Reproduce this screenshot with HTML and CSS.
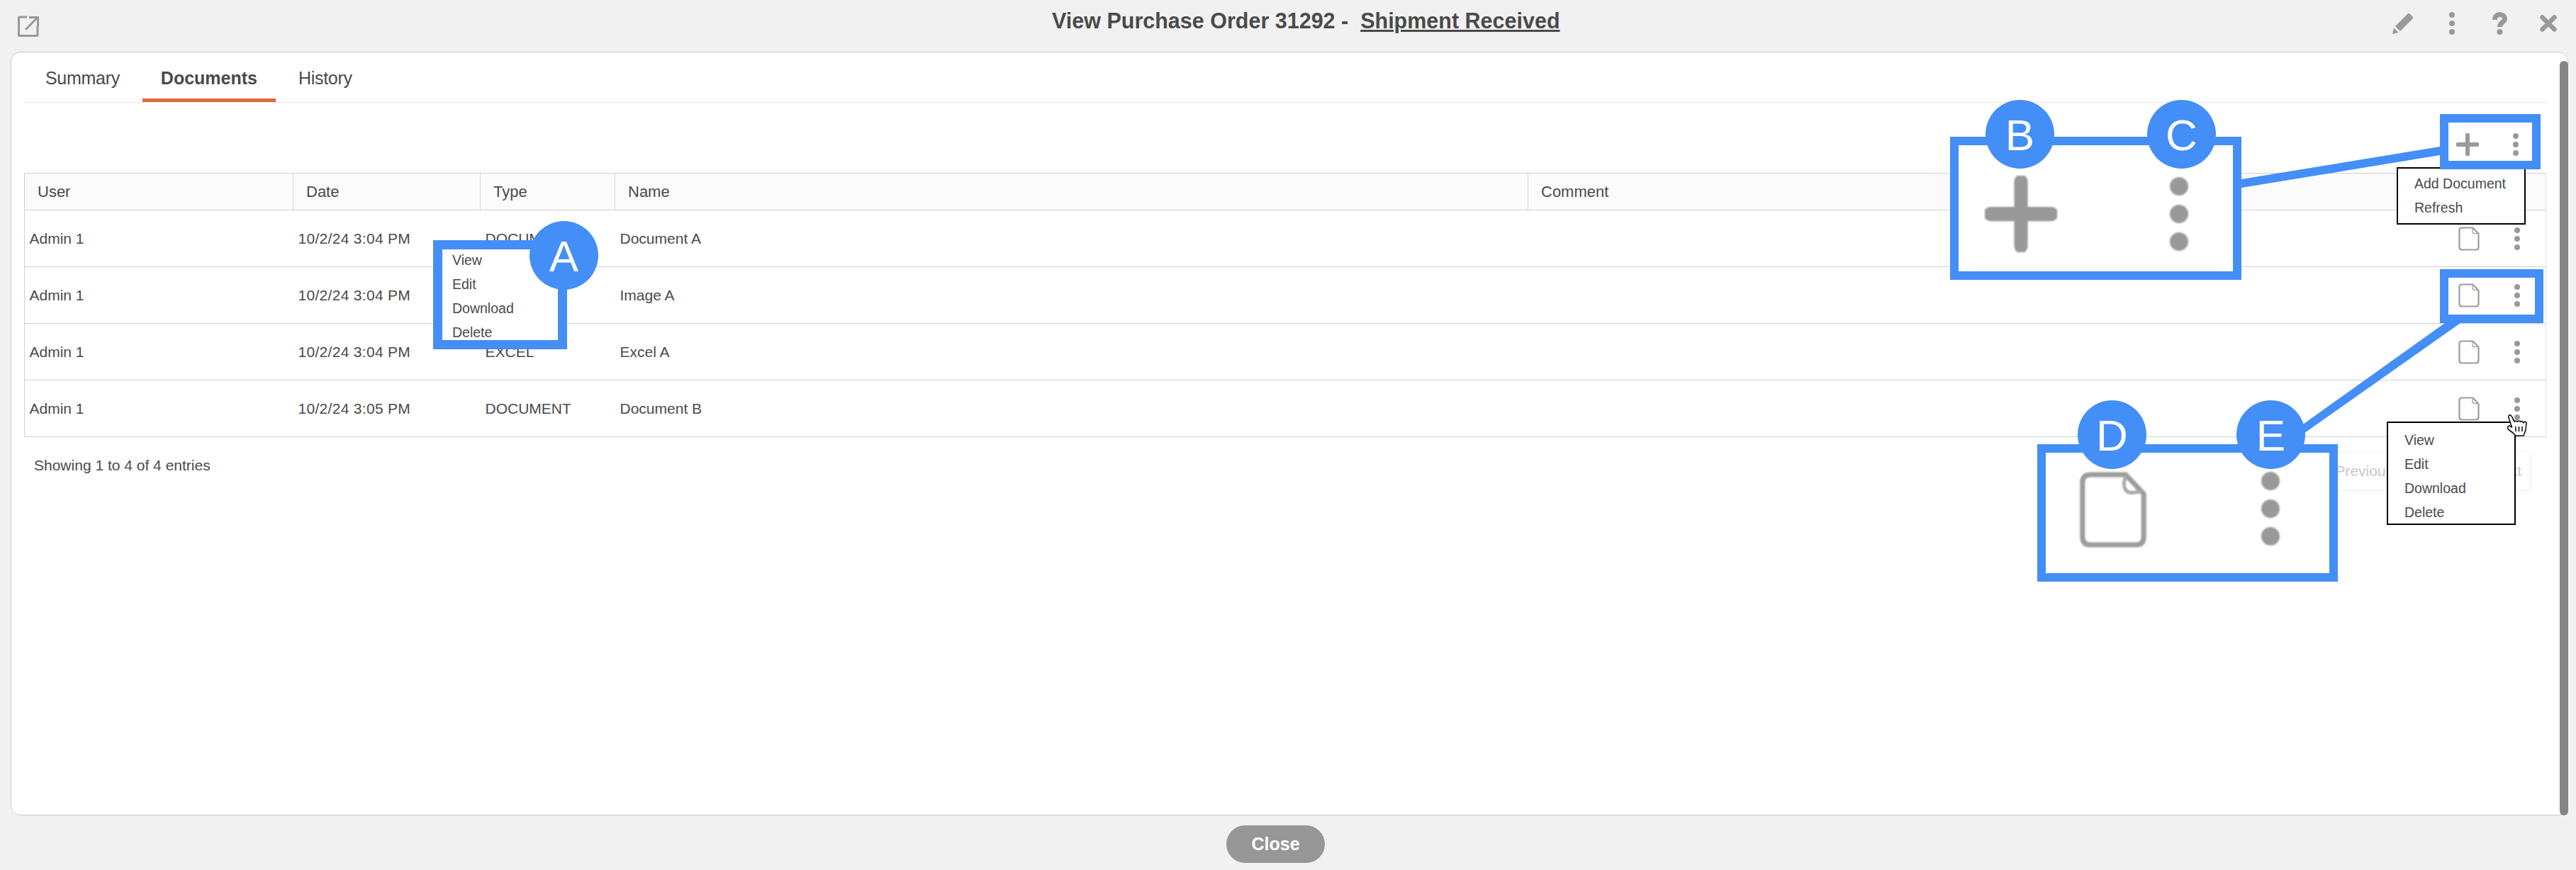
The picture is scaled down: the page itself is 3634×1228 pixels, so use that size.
FILE: index.html
```html
<!DOCTYPE html>
<html lang="en">
<head>
<meta charset="utf-8">
<title>View Purchase Order 31292</title>
<link rel="stylesheet" href="styles.css">
</head>
<body>
<svg class="defs" width="0" height="0" aria-hidden="true">
  <symbol id="doc" viewBox="0 0 30 34">
    <path d="M5 1.500H20.500L28.500 10V29Q28.500 32.500 25 32.500H5Q1.500 32.500 1.500 29V5Q1.500 1.500 5 1.500Z" fill="#fff" stroke="#9c9c9c" stroke-width="2.200" stroke-linejoin="round"/>
    <path d="M21 2C19 5 19.500 9.500 23 9.500C25 9.500 26 9.200 27.500 9" fill="none" stroke="#a8a8a8" stroke-width="1.500"/>
  </symbol>
  <symbol id="dots" viewBox="0 0 8 32">
    <circle cx="4" cy="4" r="4" fill="#999"/>
    <circle cx="4" cy="16" r="4" fill="#999"/>
    <circle cx="4" cy="28" r="4" fill="#999"/>
  </symbol>
  <symbol id="plus" viewBox="0 0 32 32">
    <path d="M16 2.500V29.500M2.500 16H29.500" fill="none" stroke="#999" stroke-width="6" stroke-linecap="round"/>
  </symbol>
</svg>

<div class="page">
  <header class="topbar">
    <svg class="ico-ext" width="30" height="30" viewBox="0 0 30 30"><path d="M13 2H2.500Q1.500 2 1.500 3V27.500Q1.500 28.500 2.500 28.500H27Q28 28.500 28 27.500V15" fill="none" stroke="#999" stroke-width="3"/><path d="M11 20L27 3.500M16 2.500H28.500V15" fill="none" stroke="#999" stroke-width="3"/></svg>
    <h1 class="title">View Purchase Order 31292 -&nbsp; <span class="status">Shipment Received</span></h1>
    <div class="top-actions">
      <svg class="ico-pencil" width="30" height="30" viewBox="0 0 30 30"><path d="M0 30L2 21.500L8.500 28Z M4 19L21 2Q23 0 25 2L28 5Q30 7 28 9L11 26Z" fill="#999"/></svg>
      <svg class="ico-dots" width="8" height="32"><use href="#dots"/></svg>
      <svg class="ico-help" width="21" height="32" viewBox="0 0 21 32"><path d="M3.500 11C3.500 6 7 3.500 10.500 3.500C14.500 3.500 17.500 6 17.500 9.500C17.500 14 10.500 14.500 10.500 21" fill="none" stroke="#999" stroke-width="7"/><circle cx="10.500" cy="28" r="4" fill="#999"/></svg>
      <svg class="ico-close" width="24" height="24" viewBox="0 0 24 24"><path d="M3.500 3.500L20.500 20.500M20.500 3.500L3.500 20.500" stroke="#999" stroke-width="6.500" stroke-linecap="round"/></svg>
    </div>
  </header>

  <main class="card">
    <nav class="tabs">
      <a class="tab">Summary</a>
      <a class="tab tab-active">Documents</a>
      <a class="tab">History</a>
    </nav>
    <div class="toolbar">
      <svg width="32" height="32"><use href="#plus"/></svg>
      <svg width="8" height="32"><use href="#dots"/></svg>
    </div>
    <table class="grid">
      <colgroup>
        <col class="c-user"><col class="c-date"><col class="c-type"><col class="c-name"><col><col class="c-act">
      </colgroup>
      <thead>
        <tr><th>User</th><th>Date</th><th>Type</th><th>Name</th><th colspan="2">Comment</th></tr>
      </thead>
      <tbody>
        <tr><td>Admin 1</td><td>10/2/24 3:04 PM</td><td>DOCUMENT</td><td>Document A</td><td></td><td><div class="row-acts"><svg width="30" height="34"><use href="#doc"/></svg><svg width="8" height="32"><use href="#dots"/></svg></div></td></tr>
        <tr><td>Admin 1</td><td>10/2/24 3:04 PM</td><td>IMAGE</td><td>Image A</td><td></td><td><div class="row-acts"><svg width="30" height="34"><use href="#doc"/></svg><svg width="8" height="32"><use href="#dots"/></svg></div></td></tr>
        <tr><td>Admin 1</td><td>10/2/24 3:04 PM</td><td>EXCEL</td><td>Excel A</td><td></td><td><div class="row-acts"><svg width="30" height="34"><use href="#doc"/></svg><svg width="8" height="32"><use href="#dots"/></svg></div></td></tr>
        <tr><td>Admin 1</td><td>10/2/24 3:05 PM</td><td>DOCUMENT</td><td>Document B</td><td></td><td><div class="row-acts"><svg width="30" height="34"><use href="#doc"/></svg><svg width="8" height="32"><use href="#dots"/></svg></div></td></tr>
      </tbody>
    </table>
    <div class="table-foot">
      <div class="info">Showing 1 to 4 of 4 entries</div>
      <div class="pager"><span>Previous</span><span>1</span><span>Next</span></div>
    </div>
    <div class="scrollbar"></div>
  </main>

  <footer class="bottom"><button class="btn-close">Close</button></footer>

  <!-- menus and tutorial annotations drawn over the page -->
  <ul class="menu menu-add"><li>Add Document</li><li>Refresh</li></ul>
  <ul class="menu menu-row"><li>View</li><li>Edit</li><li>Download</li><li>Delete</li></ul>

  <svg class="leaders" width="3634" height="1228" viewBox="0 0 3634 1228">
    <polygon points="3162,253 3442,207 3442,219 3162,265" fill="#448ef7"/>
    <polygon points="3449,456 3471,456 3237,621 3215,623" fill="#448ef7"/>
  </svg>

  <div class="frame frame-a"><ul class="frame-menu"><li>View</li><li>Edit</li><li>Download</li><li>Delete</li></ul></div>
  <div class="frame frame-small frame-bc-small"></div>
  <div class="frame frame-small frame-de-small"></div>
  <div class="frame frame-bc">
    <svg class="big big-plus" width="102" height="108" viewBox="0 0 32 32" preserveAspectRatio="none"><use href="#plus"/></svg>
    <svg class="big" width="26" height="104"><use href="#dots"/></svg>
  </div>
  <div class="frame frame-de">
    <svg class="big big-doc" width="96" height="111"><use href="#doc"/></svg>
    <svg class="big" width="26" height="104"><use href="#dots"/></svg>
  </div>

  <div class="badge badge-a">A</div>
  <div class="badge badge-b">B</div>
  <div class="badge badge-c">C</div>
  <div class="badge badge-d">D</div>
  <div class="badge badge-e">E</div>

  <svg class="cursor" width="28" height="31" viewBox="0 0 28 31"><path d="M3 1C5 0 6 2 7 4L10.500 10.500C11.500 8.500 13.500 8.500 14.500 10.500C15.500 8.500 17.500 8.500 18.500 10.500C19.500 9 21.500 9 22 11L23 12C24 9.500 27 9.500 27 12.500L26 22L23 30H12L8 26L1.500 21C0 19 0.500 16 3 16L6.500 18L2 4.500C1.500 3 2 1.500 3 1Z" fill="#fff" stroke="#111" stroke-width="1.600" stroke-linejoin="round"/><path d="M12 17V24M16.500 17V24M21 17V24" stroke="#111" stroke-width="1.600"/></svg>
</div>
</body>
</html>
```

FILE: styles.css
```css
* { box-sizing: border-box; }
html, body { margin: 0; padding: 0; }
body {
  width: 3634px;
  height: 1228px;
  overflow: hidden;
  background: #f1f1f1;
  color: #4a4a4a;
  font-family: "Liberation Sans", Arial, sans-serif;
}
.defs { position: absolute; }
.page {
  position: relative;
  width: 3634px;
  height: 1228px;
  display: flex;
  flex-direction: column;
}

/* top bar */
.topbar {
  height: 73px;
  flex: none;
  display: flex;
  align-items: flex-start;
  padding: 17px 27px 0 25px;
}
.ico-ext { margin-top: 5px; flex: none; }
.title {
  margin: 0 0 0 1429px;
  font-size: 30.500px;
  line-height: 24px;
  font-weight: 700;
  white-space: pre;
  letter-spacing: 0;
}
.status { text-decoration: underline; }
.top-actions {
  margin-left: auto;
  display: flex;
  align-items: flex-start;
}
.ico-pencil { margin: 1px 50px 0 0; }
.ico-dots { margin-right: 53px; }
.ico-help { margin-right: 46px; }
.ico-close { margin-top: 4px; }

/* card */
.card {
  position: relative;
  flex: none;
  width: 3608px;
  height: 1078px;
  margin-left: 15px;
  background: #fff;
  border: 1px solid #ccc;
  border-radius: 14px;
}
.scrollbar {
  position: absolute;
  top: 12px;
  right: -1px;
  bottom: -1px;
  width: 12px;
  background: #858585;
  border-radius: 8px;
}
.tabs {
  width: 3558px;
  height: 71px;
  margin-left: 18px;
  padding-left: 4px;
  display: flex;
  gap: 6px;
  border-bottom: 1px solid #e8e8e8;
}
.tab {
  height: 70px;
  padding: 0 26px;
  font-size: 25px;
  line-height: 72px;
  letter-spacing: -0.300px;
}
.tab-active {
  font-weight: 700;
  letter-spacing: 0;
  border-bottom: 5px solid #df6a3e;
}
.toolbar {
  width: 3558px;
  height: 99px;
  margin-left: 18px;
  padding: 43px 39px 0 0;
  display: flex;
  justify-content: flex-end;
  align-items: flex-start;
  gap: 48px;
}

/* table */
.grid {
  width: 3558px;
  margin-left: 18px;
  table-layout: fixed;
  border-collapse: separate;
  border-spacing: 0;
  border-top: 1px solid #d0d0d0;
  border-left: 1px solid #d0d0d0;
  border-right: 1px solid #e2e2e2;
}
.c-user { width: 379px; }
.c-date { width: 264px; }
.c-type { width: 190px; }
.c-name { width: 1288px; }
.c-act { width: 220px; }
.grid th {
  height: 52px;
  padding: 0 0 0 18px;
  background: #fbfbfb;
  border-bottom: 1px solid #d0d0d0;
  border-right: 1px solid #dcdcdc;
  font-size: 22px;
  font-weight: 400;
  text-align: left;
}
.grid th:last-child { border-right: 0; }
.grid td {
  height: 80px;
  padding: 0 0 0 6.500px;
  border-bottom: 1px solid #d0d0d0;
  font-size: 21px;
  white-space: nowrap;
}
.grid td:nth-child(2) { letter-spacing: 0.300px; }
.row-acts {
  display: flex;
  justify-content: flex-end;
  align-items: center;
  gap: 49px;
  padding-right: 36px;
}
.table-foot {
  width: 3558px;
  margin: 20px 0 0 18px;
  display: flex;
  justify-content: space-between;
  align-items: flex-start;
  padding: 0 21px 0 14px;
}
.info { font-size: 21px; line-height: 40px; }
.pager {
  height: 56px;
  display: flex;
  align-items: center;
  gap: 63px;
  padding: 0 13px 0 12px;
  border: 1px solid #eee;
  border-radius: 6px;
  color: #c8c8c8;
  font-size: 21px;
}

/* footer */
.bottom {
  flex: 1;
  display: flex;
  justify-content: center;
  padding: 14px 35px 0 0;
}
.btn-close {
  width: 139px;
  height: 53px;
  padding: 0;
  border: 0;
  border-radius: 27px;
  background: #979797;
  color: #fff;
  font: 700 25px "Liberation Sans", Arial, sans-serif;
}

/* floating menus */
.menu {
  position: absolute;
  margin: 0;
  list-style: none;
  background: #fff;
  border: 2px solid #000;
  font-size: 19.500px;
  line-height: 34px;
  padding: 0 0 0 23px;
}
.menu-add { left: 3381px; top: 236px; width: 182px; height: 81px; padding-top: 4px; }
.menu-row { left: 3367px; top: 595px; width: 182px; height: 146px; padding-top: 7px; }

/* annotations */
.leaders { position: absolute; left: 0; top: 0; }
.frame {
  position: absolute;
  border: 12px solid #448ef7;
  background: #fff;
}
.frame-small { background: transparent; }
.frame-a { left: 611px; top: 339px; width: 189px; height: 154px; border-width: 13px; }
.frame-menu {
  margin: -2px 0 0;
  padding: 0 0 0 14px;
  list-style: none;
  font-size: 19.500px;
  line-height: 34px;
}
.frame-bc-small { left: 3442px; top: 161px; width: 142px; height: 78px; }
.frame-de-small { left: 3442px; top: 380px; width: 146px; height: 76px; }
.frame-bc {
  left: 2751px; top: 193px; width: 411px; height: 202px;
  display: flex;
  align-items: flex-start;
  padding: 43px 0 0 37px;
  gap: 159px;
}
.frame-de {
  left: 2874px; top: 627px; width: 424px; height: 194px;
  display: flex;
  align-items: flex-start;
  padding: 25px 0 0 47px;
  gap: 161px;
}
.big { filter: blur(1px); flex: none; margin-top: 2px; }
.big-plus { margin-top: 0; }
.big-doc { margin-top: 0; }
.badge {
  position: absolute;
  width: 97px;
  height: 97px;
  padding-top: 3px;
  display: flex;
  align-items: center;
  justify-content: center;
  border-radius: 50%;
  background: #448ef7;
  color: #fff;
  font-size: 62px;
  line-height: 1;
}
.badge-a { left: 747px; top: 312px; }
.badge-b { left: 2801px; top: 141px; }
.badge-c { left: 3029px; top: 141px; }
.badge-d { left: 2931px; top: 565px; }
.badge-e { left: 3155px; top: 565px; }
.cursor { position: absolute; left: 3537px; top: 585px; }
```
